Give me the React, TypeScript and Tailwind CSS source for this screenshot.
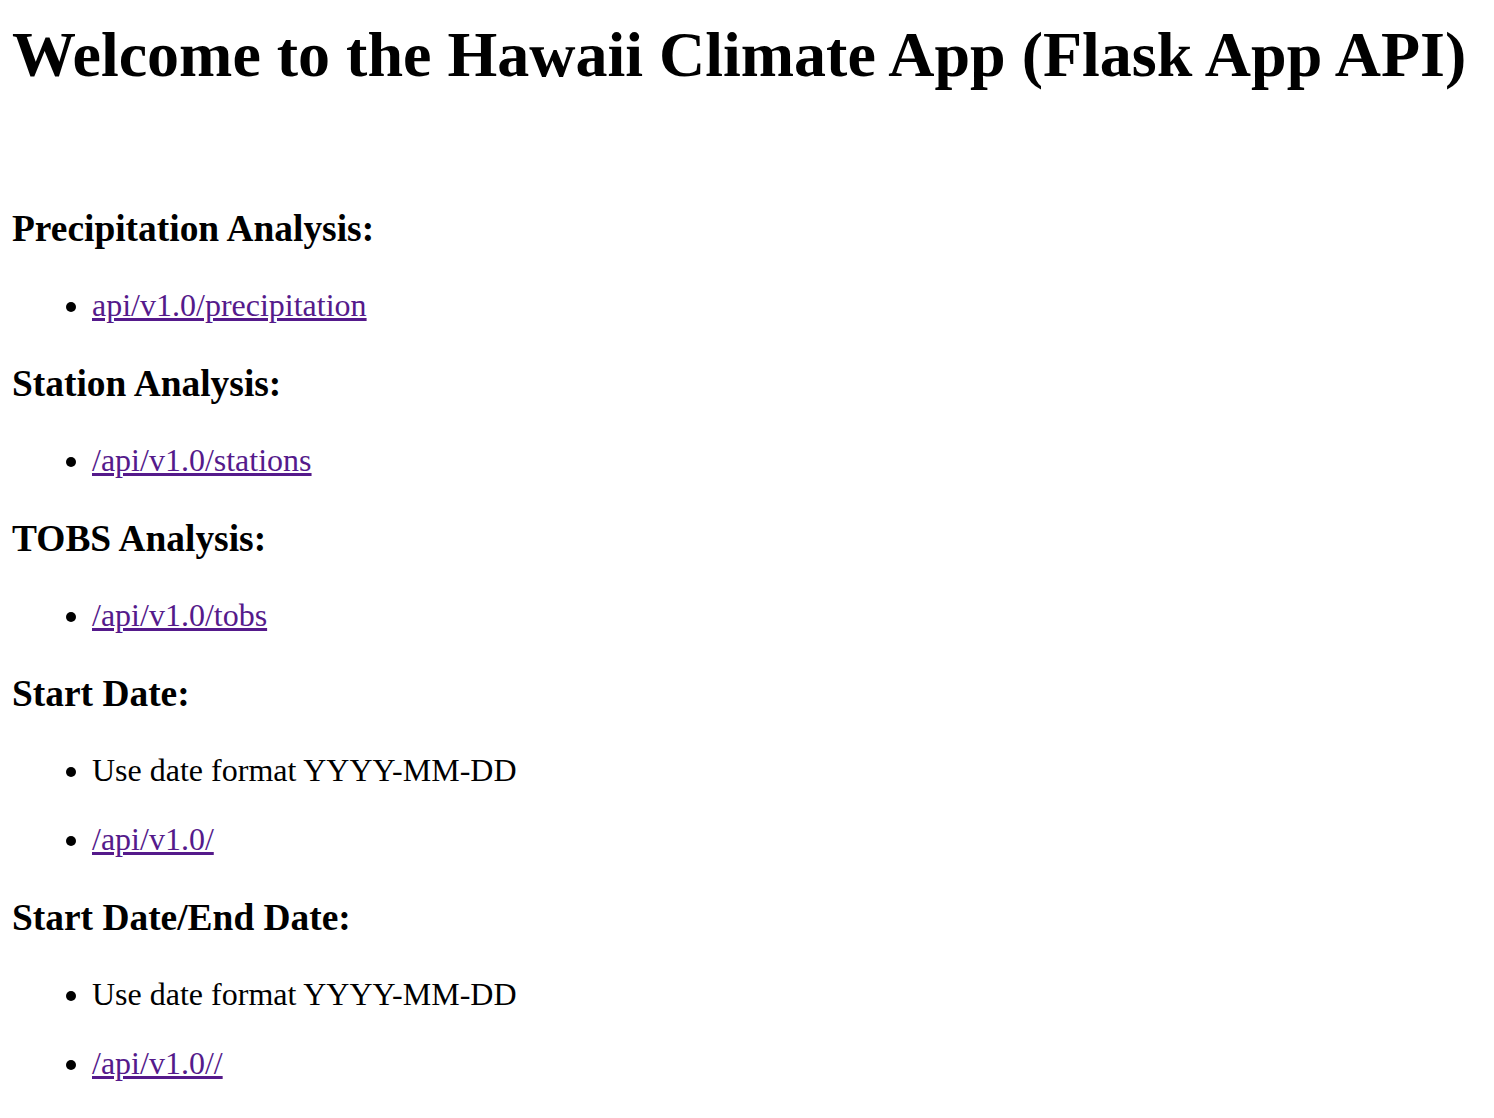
import React from "react";

const sections: { title: string; items: { text: string; link: boolean }[] }[] = [
  { title: "Precipitation Analysis:", items: [{ text: "api/v1.0/precipitation", link: true }] },
  { title: "Station Analysis:", items: [{ text: "/api/v1.0/stations", link: true }] },
  { title: "TOBS Analysis:", items: [{ text: "/api/v1.0/tobs", link: true }] },
  {
    title: "Start Date:",
    items: [
      { text: "Use date format YYYY-MM-DD", link: false },
      { text: "/api/v1.0/", link: true },
    ],
  },
  {
    title: "Start Date/End Date:",
    items: [
      { text: "Use date format YYYY-MM-DD", link: false },
      { text: "/api/v1.0//", link: true },
    ],
  },
];

export default function App() {
  return (
    <div className="min-h-[1118px] bg-white text-black font-['Liberation_Serif',serif] text-[32px] leading-[normal] pt-[18px] pl-[12px] pr-[16px] pb-[8px]">
      <h1 className="m-0 text-[64px] font-bold leading-[normal] whitespace-nowrap">
        Welcome to the Hawaii Climate App (Flask App API)
      </h1>
      <div className="pt-[115px]">
        {sections.map((s, i) => (
          <div key={i}>
            <h3 className={`${i === 0 ? "mt-0" : "mt-[37.44px]"} mb-[37.44px] text-[37.44px] font-bold leading-[normal]`}>
              {s.title}
            </h3>
            <ul className="my-[32px] list-disc pl-[80px]">
              {s.items.map((it, j) => (
                <li key={j} className="my-[32px]">
                  {it.link ? (
                    <a href="#" className="text-[#551A8B] underline">
                      {it.text}
                    </a>
                  ) : (
                    it.text
                  )}
                </li>
              ))}
            </ul>
          </div>
        ))}
      </div>
    </div>
  );
}
